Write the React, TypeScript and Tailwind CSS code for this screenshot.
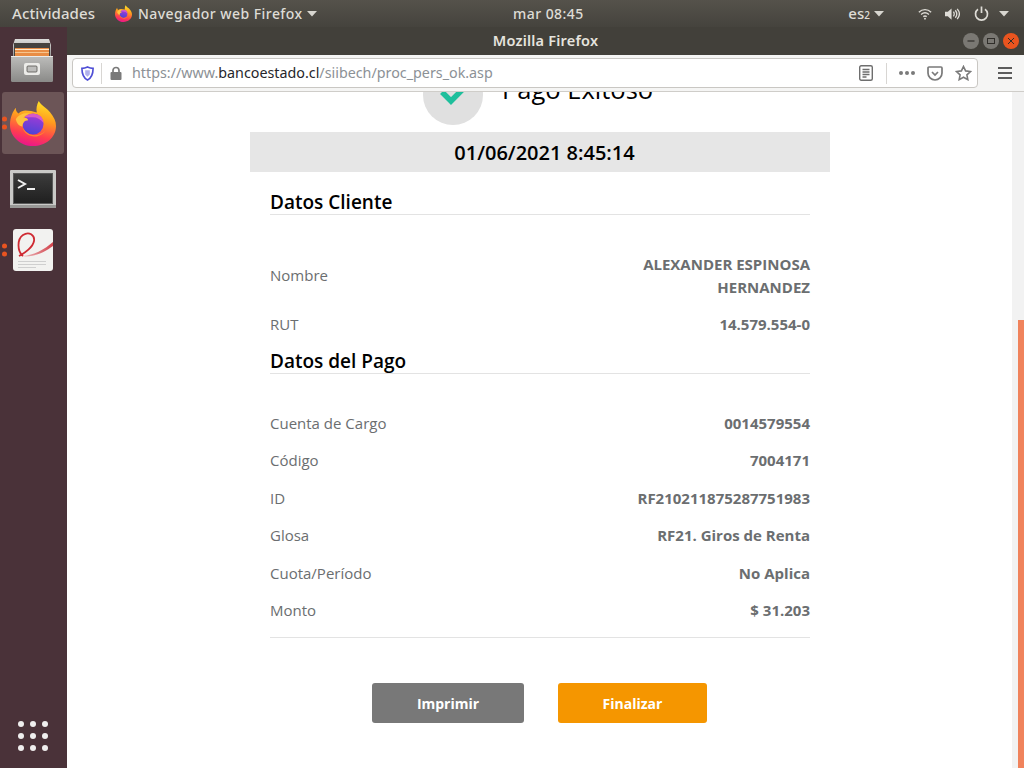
import { ReactNode } from 'react'

function FirefoxLogo({ size }: { size: number }) {
  return (
    <svg width={size} height={size} viewBox="0 0 48 48">
      <defs>
        <linearGradient id="ffBody" x1="0.65" y1="0" x2="0.4" y2="1">
          <stop offset="0" stopColor="#ffe226" />
          <stop offset="0.4" stopColor="#ff9a1f" />
          <stop offset="0.75" stopColor="#ff3d50" />
          <stop offset="1" stopColor="#e9168c" />
        </linearGradient>
        <linearGradient id="ffGlobe" x1="0.6" y1="0" x2="0.4" y2="1">
          <stop offset="0" stopColor="#a83ad6" />
          <stop offset="1" stopColor="#4b44d6" />
        </linearGradient>
      </defs>
      <path
        d="M30 1C33 6 38 8 42 13C46 18 48 22 48 27C48 39 37 48 24 48C11 48 0 38 0 26C0 18 3 12 6 8C6 11 7 13 9 14C11 12 14 11 16 11C20 11 24 12 28 13C27 9 28 5 30 1z"
        fill="url(#ffBody)"
      />
      <circle cx="24" cy="25" r="11" fill="url(#ffGlobe)" />
      <path d="M15 18C19 13 29 13 33 18C34 20 35 22 35 24C32 20 28 18 24 18C21 18 18 18 15 18z" fill="#d65ac8" />
      <path d="M6 20C9 15 15 13 21 14C17 15 15 17 14 19C16 18 18 19 19 21C15 21 13 24 13 28C9 27 7 24 6 20z" fill="#ffc23f" />
      <path d="M13 28C14 35 21 39 28 38C32 37 35 35 37 32C32 37 24 38 19 35C16 33 14 31 13 28z" fill="#ff8a2a" />
    </svg>
  )
}

function FilesIcon() {
  return (
    <svg width="42" height="44" viewBox="0 0 42 44">
      <defs>
        <linearGradient id="cab" x1="0" y1="0" x2="0" y2="1">
          <stop offset="0" stopColor="#dcdcda" />
          <stop offset="1" stopColor="#8f8f8d" />
        </linearGradient>
        <linearGradient id="drw" x1="0" y1="0" x2="0" y2="1">
          <stop offset="0" stopColor="#bdbdbb" />
          <stop offset="1" stopColor="#8a8a88" />
        </linearGradient>
      </defs>
      <path d="M4 0h34l2 6v14H2V6z" fill="url(#cab)" />
      <rect x="3" y="4" width="36" height="14" fill="#45433f" />
      <rect x="4" y="9" width="34" height="9" fill="#e98d45" />
      <rect x="4" y="10" width="34" height="1" fill="#ffe9c8" />
      <rect x="4" y="13" width="34" height="1" fill="#f7c58e" />
      <rect x="0" y="17" width="42" height="26" rx="1.500" fill="url(#drw)" />
      <rect x="0" y="17" width="42" height="1" fill="#ececea" />
      <rect x="13" y="24" width="16" height="12" rx="2" fill="#ecece9" />
      <rect x="16" y="27" width="10" height="6" rx="1" fill="#bdbdbb" stroke="#55534f" strokeWidth="0.800" />
    </svg>
  )
}

function TerminalIcon() {
  return (
    <svg width="46" height="38" viewBox="0 0 46 38">
      <defs>
        <linearGradient id="term" x1="0" y1="0" x2="0" y2="1">
          <stop offset="0" stopColor="#3c3c3c" />
          <stop offset="1" stopColor="#1f1f1f" />
        </linearGradient>
      </defs>
      <rect x="0" y="0" width="46" height="38" rx="1" fill="#c9c9c7" />
      <rect x="0" y="35" width="46" height="3" fill="#989896" />
      <rect x="3.500" y="3.500" width="39" height="30" fill="url(#term)" stroke="#5a5a5a" />
      <path d="M8 10l7 4-7 4" fill="none" stroke="#f0f0f0" strokeWidth="2" />
      <rect x="17" y="18" width="8" height="2" fill="#f0f0f0" />
    </svg>
  )
}

function PdfIcon() {
  return (
    <svg width="40" height="42" viewBox="0 0 40 42">
      <defs>
        <linearGradient id="swoosh" x1="0" y1="0" x2="1" y2="0">
          <stop offset="0" stopColor="#efc4c6" />
          <stop offset="1" stopColor="#d2414a" />
        </linearGradient>
      </defs>
      <rect x="0" y="0" width="40" height="42" rx="3" fill="#f2f2f0" />
      <path d="M8 27C20 27 32 20 40 13V17C32 23 20 29 8 27z" fill="url(#swoosh)" />
      <path d="M10 27C4 22 4 10 10 6C16 2 22 6 21 12C20 18 12 24 6 27" fill="none" stroke="#cf2a32" strokeWidth="1.800" />
      <rect x="5" y="32" width="28" height="1" fill="#cfcfcf" />
      <rect x="5" y="35" width="28" height="1" fill="#cfcfcf" />
      <rect x="5" y="38" width="18" height="1" fill="#cfcfcf" />
    </svg>
  )
}

function RunDots() {
  return (
    <div className="absolute left-0 top-1/2 flex -translate-y-1/2 flex-col gap-[3px]">
      <span className="h-[5px] w-[5px] rounded-full bg-[#e95420]" />
      <span className="h-[5px] w-[5px] rounded-full bg-[#e95420]" />
    </div>
  )
}

function Dock() {
  return (
    <aside className="flex w-[67px] shrink-0 flex-col bg-[#4a3239] pl-[2px] pt-[1px]">
      <div className="flex h-[64px] w-[62px] items-center justify-center pr-[2px] pt-[2px]">
        <FilesIcon />
      </div>
      <div className="relative flex h-[62px] w-[62px] items-center justify-center rounded-[3px] bg-[#6c5557]">
        <FirefoxLogo size={46} />
        <RunDots />
      </div>
      <div className="mt-[4px] flex h-[62px] w-[62px] items-center justify-center">
        <TerminalIcon />
      </div>
      <div className="relative flex h-[60px] w-[62px] items-center justify-center">
        <PdfIcon />
        <RunDots />
      </div>
      <div className="mt-auto mb-[17px] ml-[16px] grid w-[30px] grid-cols-3 gap-[6px]">
        {Array.from({ length: 9 }).map((_, i) => (
          <span key={i} className="h-[6px] w-[6px] rounded-full bg-[#f0eeee]" />
        ))}
      </div>
    </aside>
  )
}

function Caret({ className }: { className?: string }) {
  return (
    <svg width="10" height="6" viewBox="0 0 10 6" className={className}>
      <path d="M0 0h10L5 5.500z" fill="#d8d6d0" />
    </svg>
  )
}

function TopBar() {
  return (
    <header className="flex h-[27px] shrink-0 items-center whitespace-nowrap bg-gradient-to-b from-[#55524b] to-[#45433d] font-['Noto_Sans',sans-serif] text-[14px] font-medium text-[#dedcd6]">
      <span className="ml-[12px] w-[83px] text-[15px] tracking-[0.1px]">Actividades</span>
      <span className="ml-[20px]">
        <FirefoxLogo size={17} />
      </span>
      <span className="ml-[6px] w-[164px] tracking-[0.45px]">Navegador web Firefox</span>
      <Caret className="ml-[5px]" />
      <span className="ml-[196px] tracking-[0.45px]">mar 08:45</span>
      <span className="ml-auto flex items-baseline text-[15px]">
        es<span className="text-[10px]">2</span>
      </span>
      <Caret className="ml-[4px]" />
      <svg width="14" height="14" viewBox="0 0 16 14" className="ml-[34px]" fill="none" stroke="#dedcd6" strokeWidth="1.600">
        <path d="M1 5c4-4 10-4 14 0M3.500 7.500c3-2.500 6-2.500 9 0M6 10c1.500-1 2.500-1 4 0" />
        <circle cx="8" cy="12.300" r="1.100" fill="#dedcd6" stroke="none" />
      </svg>
      <svg width="15" height="14" viewBox="0 0 16 14" className="ml-[13px]" fill="none">
        <path d="M0 4.500h3L7 1v12L3 9.500H0z" fill="#dedcd6" />
        <path d="M9 4.500c1 1.500 1 3.500 0 5M11 3c2 2.500 2 5.500 0 8M13 1.500c3 3.500 3 7.500 0 11" stroke="#dedcd6" strokeWidth="1.400" />
      </svg>
      <svg width="15" height="15" viewBox="0 0 15 15" className="ml-[14px]" fill="none" stroke="#dedcd6" strokeWidth="1.700">
        <path d="M4 3.200a6 6 0 1 0 7 0M7.500 0.500v6.500" />
      </svg>
      <Caret className="ml-[10px] mr-[15px]" />
    </header>
  )
}

function WinButton({ bg, children }: { bg: string; children: ReactNode }) {
  return (
    <span className={`flex h-[16px] w-[16px] items-center justify-center rounded-full ${bg}`}>
      <svg width="10" height="10" viewBox="0 0 10 10" fill="none" stroke="#302e2a" strokeWidth="1">
        {children}
      </svg>
    </span>
  )
}

function TitleBar() {
  return (
    <div className="relative flex h-[28px] shrink-0 items-center justify-center bg-[#42403a] font-['Noto_Sans',sans-serif] text-[14.500px] font-semibold tracking-[0.2px] text-[#e6e4de]">
      <span>Mozilla Firefox</span>
      <div className="absolute right-[5px] top-[6px] flex gap-[4px]">
        <WinButton bg="bg-[#7a7873]">
          <path d="M1.500 5h7" strokeWidth="1.200" />
        </WinButton>
        <WinButton bg="bg-[#7a7873]">
          <rect x="1.500" y="2.500" width="7" height="5" />
        </WinButton>
        <WinButton bg="bg-[#e9541f]">
          <path d="M2 2l6 6M8 2l-6 6" />
        </WinButton>
      </div>
    </div>
  )
}

function Toolbar() {
  return (
    <div className="flex h-[37px] shrink-0 items-center border-b border-[#cfcdc9] bg-[#f5f5f4] pl-[5px] pr-[12px]">
      <div className="flex h-[30px] w-[906px] items-center rounded-[4px] border border-[#c9c7c3] bg-white">
        <svg width="13" height="15" viewBox="0 0 14 16" className="ml-[8px]">
          <path d="M7 1c2 1 4 1.500 6 1.500 0 6-1.500 10-6 12.500C2.500 12.500 1 8.500 1 2.500 3 2.500 5 2 7 1z" fill="none" stroke="#4f4fd6" strokeWidth="1.800" />
          <path d="M4.500 4.500h5V9L7 11.500 4.500 9z" fill="#4f4fd6" opacity="0.45" />
        </svg>
        <span className="ml-[7px] h-[21px] w-px bg-[#d8d6d3]" />
        <svg width="12" height="14" viewBox="0 0 12 14" className="ml-[8px]" fill="none">
          <path d="M3 6.500V4.500a3 3 0 0 1 6 0v2" stroke="#7a7a7a" strokeWidth="1.700" />
          <rect x="0.500" y="6" width="11" height="8" rx="1" fill="#7a7a7a" />
        </svg>
        <span className="ml-[10px] font-['Noto_Sans',sans-serif] text-[14.300px] text-[#8c9196]">
          https://www.<span className="text-[#26262b]">bancoestado.cl</span>/siibech/proc_pers_ok.asp
        </span>
        <svg width="14" height="16" viewBox="0 0 14 16" className="ml-auto" fill="none" stroke="#6e6e6e" strokeWidth="1.300">
          <rect x="0.700" y="0.700" width="12.600" height="14.600" rx="1.500" strokeWidth="1.400" />
          <path d="M3.500 4.500h7M3.500 7h7M3.500 9.500h7M3.500 12h4" />
        </svg>
        <span className="ml-[13px] h-[21px] w-px bg-[#d8d6d3]" />
        <span className="ml-[12px] flex gap-[2px]">
          <span className="h-[4px] w-[4px] rounded-full bg-[#7a7a7a]" />
          <span className="h-[4px] w-[4px] rounded-full bg-[#7a7a7a]" />
          <span className="h-[4px] w-[4px] rounded-full bg-[#7a7a7a]" />
        </span>
        <svg width="16" height="15" viewBox="0 0 16 15" className="ml-[12px]" fill="none" stroke="#7a7a7a" strokeWidth="1.700">
          <path d="M2 1h12a1 1 0 0 1 1 1v5a7 7 0 0 1-14 0V2a1 1 0 0 1 1-1z" />
          <path d="M5 6l3 3 3-3" />
        </svg>
        <svg width="17" height="16" viewBox="0 0 17 16" className="ml-[12px] mr-[5px]" fill="none" stroke="#7a7a7a" strokeWidth="1.600">
          <path d="M8.500 1.500l2.100 4.400 4.900.6-3.600 3.300.9 4.800-4.300-2.400-4.300 2.400.9-4.800L1.500 6.500l4.900-.6z" />
        </svg>
      </div>
      <div className="ml-auto flex w-[14px] flex-col gap-[3px]">
        <span className="h-[2px] bg-[#5c5c5c]" />
        <span className="h-[2px] bg-[#5c5c5c]" />
        <span className="h-[2px] bg-[#5c5c5c]" />
      </div>
    </div>
  )
}

function Row({ label, value }: { label: string; value: ReactNode }) {
  return (
    <div className="flex h-[37.500px] items-center justify-between">
      <span className="text-[15px] text-[#6b6e70]">{label}</span>
      <span className="text-right text-[15px] font-bold text-[#6b6e70]">{value}</span>
    </div>
  )
}

function Section({ title }: { title: string }) {
  return (
    <h2 className="h-[25px] border-b border-[#e3e3e3] text-[19px] leading-[25px] font-semibold text-black">{title}</h2>
  )
}

function Receipt() {
  return (
    <div className="ml-[183px] w-[580px] font-['Open_Sans',sans-serif]">
      <div className="mt-[-27px] flex h-[60px] items-center pl-[173px]">
        <div className="flex h-[60px] w-[60px] shrink-0 items-center justify-center rounded-full bg-[#e0e0e0]">
          <svg width="26" height="20" viewBox="0 0 26 20" className="mb-[1px]">
            <path d="M2 7l9 9L24 3" fill="none" stroke="#1fbf9c" strokeWidth="5.500" />
          </svg>
        </div>
        <span className="ml-[19px] mb-[11px] text-[25.500px] leading-none text-black">Pago Exitoso</span>
      </div>
      <div className="mt-[7px] flex h-[40px] items-center justify-center bg-[#e6e6e6] pl-[9px] pt-[1px] text-[20px] font-semibold text-black">
        01/06/2021 8:45:14
      </div>
      <div className="px-[20px]">
        <div className="pt-[18px]">
          <Section title="Datos Cliente" />
        </div>
        <div className="mt-[38px] flex h-[46px] items-center justify-between">
          <span className="mb-[2px] text-[15px] text-[#6b6e70]">Nombre</span>
          <span className="w-[200px] text-right text-[15px] leading-[23px] font-bold text-[#6b6e70]">
            ALEXANDER ESPINOSA HERNANDEZ
          </span>
        </div>
        <div className="mt-[6px]">
          <Row label="RUT" value="14.579.554-0" />
        </div>
        <div className="mt-[6px]">
          <Section title="Datos del Pago" />
        </div>
        <div className="mt-[30.500px]">
          <Row label="Cuenta de Cargo" value="0014579554" />
          <Row label="Código" value="7004171" />
          <Row label="ID" value="RF210211875287751983" />
          <Row label="Glosa" value="RF21. Giros de Renta" />
          <Row label="Cuota/Período" value="No Aplica" />
          <Row label="Monto" value="$ 31.203" />
        </div>
        <div className="mt-[8px] h-px bg-[#e3e3e3]" />
      </div>
      <div className="mt-[45px] flex pl-[122px] text-[14px] font-bold text-white">
        <button className="h-[40px] w-[152px] rounded-[3px] bg-[#787878]">Imprimir</button>
        <button className="ml-[34px] h-[40px] w-[149px] rounded-[3px] bg-[#f59600]">Finalizar</button>
      </div>
    </div>
  )
}

export default function App() {
  return (
    <div className="flex h-[768px] w-[1024px] flex-col overflow-hidden bg-white">
      <TopBar />
      <div className="flex min-h-0 flex-1">
        <Dock />
        <div className="flex min-w-0 flex-1 flex-col">
          <TitleBar />
          <Toolbar />
          <div className="flex min-h-0 flex-1">
            <main className="min-w-0 flex-1 overflow-hidden">
              <Receipt />
            </main>
            <div className="flex w-[12px] shrink-0 flex-col items-end bg-[#f2f2f2] pt-[228px]">
              <div className="w-[6px] flex-1 bg-[#f0835c]" />
            </div>
          </div>
        </div>
      </div>
    </div>
  )
}
